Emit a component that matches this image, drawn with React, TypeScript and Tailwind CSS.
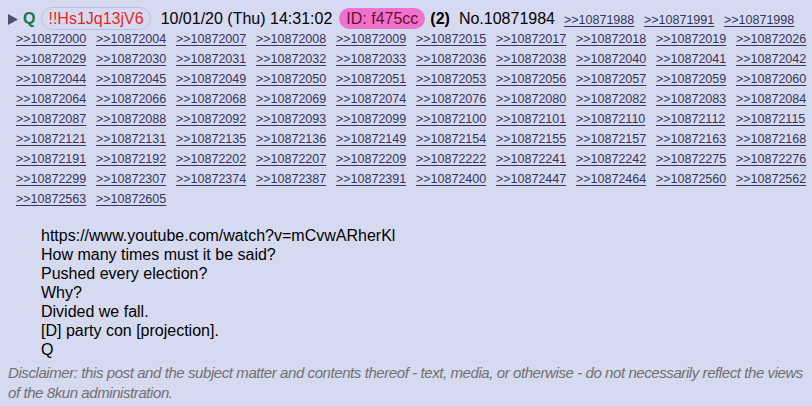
const FIRST_LINKS = ["10871988", "10871991", "10871998"];

const REPLY_LINKS = [
  "10872000", "10872004", "10872007", "10872008", "10872009", "10872015", "10872017", "10872018", "10872019", "10872026",
  "10872029", "10872030", "10872031", "10872032", "10872033", "10872036", "10872038", "10872040", "10872041", "10872042",
  "10872044", "10872045", "10872049", "10872050", "10872051", "10872053", "10872056", "10872057", "10872059", "10872060",
  "10872064", "10872066", "10872068", "10872069", "10872074", "10872076", "10872080", "10872082", "10872083", "10872084",
  "10872087", "10872088", "10872092", "10872093", "10872099", "10872100", "10872101", "10872110", "10872112", "10872115",
  "10872121", "10872131", "10872135", "10872136", "10872149", "10872154", "10872155", "10872157", "10872163", "10872168",
  "10872191", "10872192", "10872202", "10872207", "10872209", "10872222", "10872241", "10872242", "10872275", "10872276",
  "10872299", "10872307", "10872374", "10872387", "10872391", "10872400", "10872447", "10872464", "10872560", "10872562",
  "10872563", "10872605",
];

const BODY = [
  "https://www.youtube.com/watch?v=mCvwARherKl",
  "How many times must it be said?",
  "Pushed every election?",
  "Why?",
  "Divided we fall.",
  "[D] party con [projection].",
  "Q",
];

function ReplyLink({ id }: { id: string }) {
  return (
    <a
      href={`#${id}`}
      className="w-[70px] whitespace-nowrap text-[12.5px] leading-[20px] text-[#34345c] underline decoration-1 underline-offset-[2px]"
    >
      &gt;&gt;{id}
    </a>
  );
}

export default function App() {
  return (
    <div className="min-h-screen bg-[#d6daf0] font-['Liberation_Sans',Arial,sans-serif] text-black">
      <div className="pt-[7px]">
        {/* post header */}
        <div className="flex items-baseline whitespace-nowrap pl-[8px] text-[16px]">
          <svg width="10" height="11" viewBox="0 0 10 11" className="mr-[5px] self-center" aria-hidden>
            <polygon points="0,0 10,5.5 0,11" fill="#4e5070" />
          </svg>
          <span className="mr-[6px] font-bold text-[#117743]">Q</span>
          <span className="mr-[10px] rounded-full border border-[#b9bee6] px-[6px] leading-[21px] text-[#e8261f]">
            !!Hs1Jq13jV6
          </span>
          <span className="mr-[7px]">10/01/20 (Thu) 14:31:02</span>
          <span className="mr-[5px] rounded-full bg-[#f072cf] px-[7px] leading-[21px] text-[#6a0f2a]">
            ID: f475cc
          </span>
          <span className="mr-[9px] font-bold">(2)</span>
          <span className="mr-[9px]">No.10871984</span>
          <div className="flex gap-x-[10px]">
            {FIRST_LINKS.map((id) => (
              <ReplyLink key={id} id={id} />
            ))}
          </div>
        </div>

        {/* backlinks */}
        <div className="-mt-[2px] flex flex-wrap gap-x-[10px] pl-[16px]">
          {REPLY_LINKS.map((id) => (
            <ReplyLink key={id} id={id} />
          ))}
        </div>

        {/* body */}
        <div className="mt-[17px] pl-[41px] text-[16px] leading-[19px]">
          {BODY.map((line, i) => (
            <div key={i}>{line}</div>
          ))}
        </div>

        <p className="mt-[4px] pl-[8px] text-[15px] italic leading-[20px] tracking-[-0.42px] text-[#707070]">
          Disclaimer: this post and the subject matter and contents thereof - text, media, or otherwise - do not
          necessarily reflect the views of the 8kun administration.
        </p>
      </div>
    </div>
  );
}
